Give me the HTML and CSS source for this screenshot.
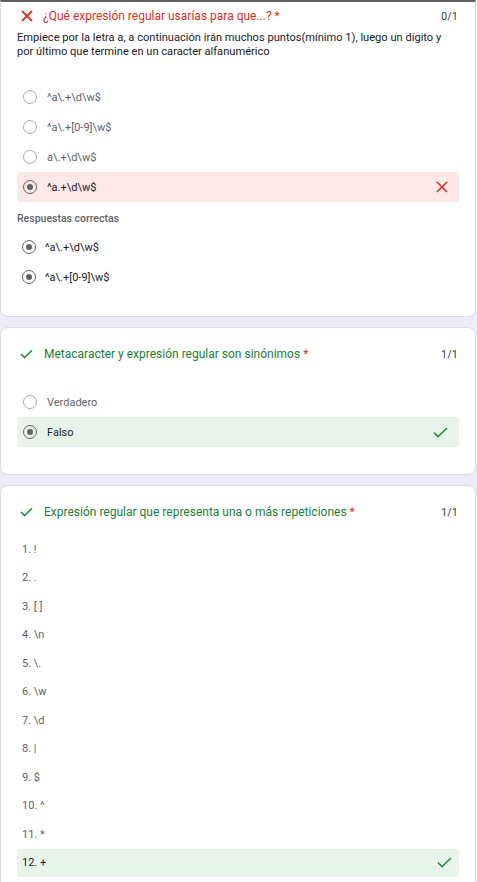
FILE: index.html
```html
<!DOCTYPE html>
<html lang="es">
<head>
<meta charset="utf-8">
<link rel="stylesheet" href="styles.css">
</head>
<body>
<div class="page">
  <section class="card card-first">
    <div class="q-head">
      <svg class="q-icon" width="12" height="12" viewBox="0 0 12 12"><path d="M1 1 L11 11 M11 1 L1 11" stroke="#d93025" stroke-width="1.8" fill="none"/></svg>
      <div class="q-title wrong">¿Qué expresión regular usarías para que...? <span class="req-same">*</span></div>
      <div class="q-score">0/1</div>
    </div>
    <p class="q-desc">Empiece por la letra a, a continuación irán muchos puntos(mínimo 1), luego un dígito y por último que termine en un caracter alfanumérico</p>
    <div class="opts">
      <div class="opt"><span class="radio"></span><span class="opt-text">^a\.+\d\w$</span></div>
      <div class="opt"><span class="radio"></span><span class="opt-text">^a\.+[0-9]\w$</span></div>
      <div class="opt"><span class="radio"></span><span class="opt-text">a\.+\d\w$</span></div>
      <div class="opt opt-wrong"><span class="radio checked"></span><span class="opt-text dark">^a.+\d\w$</span>
        <svg class="mark" width="12" height="12" viewBox="0 0 12 12"><path d="M1 1 L11 11 M11 1 L1 11" stroke="#d93025" stroke-width="1.6" fill="none"/></svg>
      </div>
    </div>
    <div class="correct-label">Respuestas correctas</div>
    <div class="opts correct-opts">
      <div class="opt"><span class="radio checked"></span><span class="opt-text dark">^a\.+\d\w$</span></div>
      <div class="opt"><span class="radio checked"></span><span class="opt-text dark">^a\.+[0-9]\w$</span></div>
    </div>
  </section>

  <section class="card">
    <div class="q-head">
      <svg class="q-icon check" width="13" height="10" viewBox="0 0 13 10"><path d="M1 5 L4.6 8.6 L12 1.2" stroke="#1e8e3e" stroke-width="1.5" fill="none"/></svg>
      <div class="q-title right">Metacaracter y expresión regular son sinónimos <span class="req">*</span></div>
      <div class="q-score">1/1</div>
    </div>
    <div class="opts opts-tf">
      <div class="opt"><span class="radio"></span><span class="opt-text big">Verdadero</span></div>
      <div class="opt opt-right"><span class="radio checked"></span><span class="opt-text big dark">Falso</span>
        <svg class="mark" width="15" height="11" viewBox="0 0 15 11"><path d="M1 5.6 L5 9.6 L14 1" stroke="#1e8e3e" stroke-width="1.5" fill="none"/></svg>
      </div>
    </div>
  </section>

  <section class="card card-last">
    <div class="q-head">
      <svg class="q-icon check" width="13" height="10" viewBox="0 0 13 10"><path d="M1 5 L4.6 8.6 L12 1.2" stroke="#1e8e3e" stroke-width="1.5" fill="none"/></svg>
      <div class="q-title right">Expresión regular que representa una o más repeticiones <span class="req">*</span></div>
      <div class="q-score">1/1</div>
    </div>
    <ol class="list">
      <li class="item">1. !</li>
      <li class="item">2. .</li>
      <li class="item">3. [ ]</li>
      <li class="item">4. \n</li>
      <li class="item">5. \.</li>
      <li class="item">6. \w</li>
      <li class="item">7. \d</li>
      <li class="item">8. |</li>
      <li class="item">9. $</li>
      <li class="item">10. ^</li>
      <li class="item">11. *</li>
      <li class="item item-right">12. +
        <svg class="mark" width="15" height="11" viewBox="0 0 15 11"><path d="M1 5.6 L5 9.6 L14 1" stroke="#1e8e3e" stroke-width="1.5" fill="none"/></svg>
      </li>
    </ol>
  </section>
</div>
</body>
</html>
```

FILE: styles.css
```css
* { box-sizing: border-box; }
html, body {
  margin: 0;
  padding: 0;
  background: #f0ebf8;
  font-family: Roboto, "Noto Sans", Arial, sans-serif;
  color: #202124;
}
.page {
  display: flex;
  flex-direction: column;
  gap: 10px;
  width: 476px;
}
.card {
  background: #fff;
  border: 1px solid #dadce0;
  border-radius: 8px;
  padding: 14px 16px 27px 16px;
}
.card-first {
  border-top: 2px solid #5f6063;
  border-radius: 0 0 8px 8px;
  padding-top: 2px;
  padding-bottom: 24px;
}
.card-last {
  padding-bottom: 10px;
}
.q-head {
  display: flex;
  align-items: center;
  height: 24px;
}
.q-icon {
  margin-left: 4px;
  margin-right: 10px;
  flex: none;
}
.q-icon.check {
  margin-left: 3px;
  margin-right: 11px;
}
.q-title {
  flex: 1;
  font-size: 12px;
}
.q-title.wrong { color: #d93025; }
.q-title.right { color: #188038; }
.req { color: #d93025; }
.q-score {
  font-size: 11px;
  color: #3c4043;
  margin-right: 1px;
}
.q-desc {
  margin: 3px 0 0 0;
  padding-right: 10px;
  font-size: 11.1px;
  line-height: 14px;
  color: #202124;
}
.opts {
  display: flex;
  flex-direction: column;
  margin-top: 23px;
}
.opts-tf { margin-top: 21px; }
.correct-opts { margin-top: 5px; }
.opt {
  display: flex;
  align-items: center;
  height: 30px;
  padding-left: 6px;
  padding-right: 11px;
  border-radius: 4px;
}
.opt-wrong { background: #fce8e6; }
.opt-right { background: #e6f4ea; }
.radio {
  width: 14px;
  height: 14px;
  border-radius: 50%;
  border: 1.3px solid #a8abaf;
  flex: none;
  display: flex;
  align-items: center;
  justify-content: center;
}
.radio.checked {
  border: 1.3px solid #5f6368;
}
.radio.checked::after {
  content: "";
  width: 6px;
  height: 6px;
  border-radius: 50%;
  background: #5f6368;
}
.opt-text {
  margin-left: 10px;
  flex: 1;
  font-size: 11px;
  color: #5f6368;
}
.correct-opts .opt { padding-left: 5px; }
.correct-opts .opt-text { margin-left: 9px; }
.opt-text.big { font-size: 11px; }
.opt-text.dark { color: #202124; }
.mark { flex: none; }
.correct-label {
  margin-top: 9px;
  height: 16px;
  line-height: 16px;
  font-size: 10.5px;
  font-weight: 500;
  color: #5f6368;
}
.list {
  list-style: none;
  margin: 11px 0 0 0;
  padding: 0;
}
.item {
  display: flex;
  align-items: center;
  height: 28.5px;
  padding-left: 5px;
  padding-right: 7px;
  font-size: 11px;
  color: #5f6368;
  border-radius: 4px;
}
.item-right {
  background: #e6f4ea;
  color: #202124;
  justify-content: space-between;
}
```
